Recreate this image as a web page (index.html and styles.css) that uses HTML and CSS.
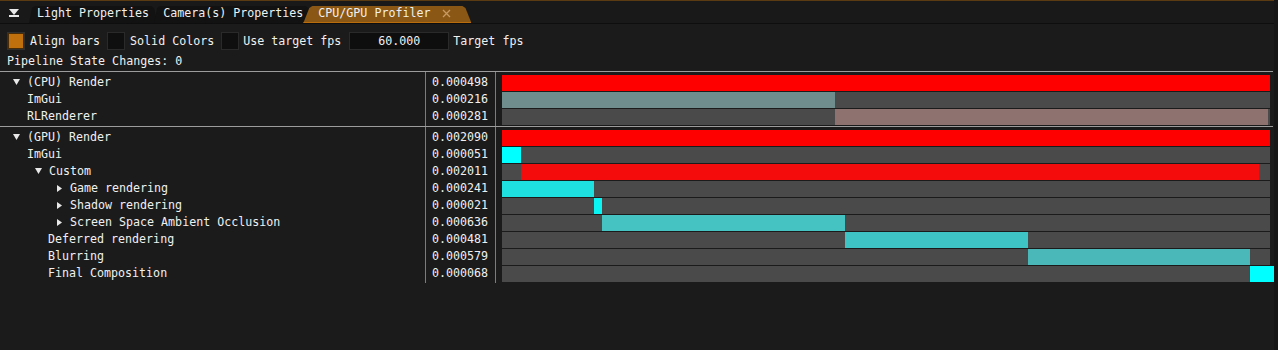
FILE: index.html
```html
<!DOCTYPE html>
<html lang="en">
<head>
  <meta charset="UTF-8">
  <title>CPU/GPU Profiler</title>
  <link rel="stylesheet" href="styles.css">
</head>
<body>
  <div class="window">
    <div class="tabbar">
      <div class="menu-btn">
        <svg width="10" height="8" viewBox="0 0 10 8"><path d="M0 0H10L5 6Z" fill="#e8e8e8"/><rect x="0" y="6" width="10" height="2" fill="#e8e8e8"/></svg>
      </div>
      <div class="tab">Light Properties</div>
      <div class="tab">Camera(s) Properties</div>
      <div class="tab active">CPU/GPU Profiler
        <svg class="close" width="9" height="9" viewBox="0 0 9 9"><path d="M1 1L8 8M8 1L1 8" stroke="#c89a62" stroke-width="1.3"/></svg>
      </div>
    </div>

    <div class="controls">
      <div class="ctl-row">
        <span class="check on"></span><span class="label">Align bars</span>
        <span class="check"></span><span class="label">Solid Colors</span>
        <span class="check"></span><span class="label short">Use target fps</span>
        <span class="input">60.000</span><span class="label short">Target fps</span>
      </div>
      <div class="text-line">Pipeline State Changes: 0</div>
    </div>

    <div class="section">
      <div class="row">
        <div class="name node d1"><svg class="arrow" width="7" height="6" viewBox="0 0 7 6"><path d="M0 0H7L3.5 6Z"/></svg>(CPU) Render</div>
        <div class="num">0.000498</div>
        <div class="bar"><span class="seg red" style="width:768px"></span></div>
      </div>
      <div class="row">
        <div class="name leaf l1">ImGui</div>
        <div class="num">0.000216</div>
        <div class="bar"><span class="seg slate" style="width:333px"></span></div>
      </div>
      <div class="row">
        <div class="name leaf l1">RLRenderer</div>
        <div class="num">0.000281</div>
        <div class="bar"><span class="gap" style="width:333px"></span><span class="seg rose" style="width:433px"></span></div>
      </div>
    </div>

    <div class="section">
      <div class="row">
        <div class="name node d1"><svg class="arrow" width="7" height="6" viewBox="0 0 7 6"><path d="M0 0H7L3.5 6Z"/></svg>(GPU) Render</div>
        <div class="num">0.002090</div>
        <div class="bar"><span class="seg red" style="width:768px"></span></div>
      </div>
      <div class="row">
        <div class="name leaf l1">ImGui</div>
        <div class="num">0.000051</div>
        <div class="bar"><span class="seg cyan" style="width:19px"></span></div>
      </div>
      <div class="row">
        <div class="name node d2"><svg class="arrow" width="7" height="6" viewBox="0 0 7 6"><path d="M0 0H7L3.5 6Z"/></svg>Custom</div>
        <div class="num">0.002011</div>
        <div class="bar"><span class="gap" style="width:19px"></span><span class="seg red2" style="width:738px"></span></div>
      </div>
      <div class="row">
        <div class="name node d3"><svg class="arrow" width="7" height="7" viewBox="0 0 7 7"><path d="M1 0V7L6 3.5Z"/></svg>Game rendering</div>
        <div class="num">0.000241</div>
        <div class="bar"><span class="seg aqua" style="width:92px"></span></div>
      </div>
      <div class="row">
        <div class="name node d3"><svg class="arrow" width="7" height="7" viewBox="0 0 7 7"><path d="M1 0V7L6 3.5Z"/></svg>Shadow rendering</div>
        <div class="num">0.000021</div>
        <div class="bar"><span class="gap" style="width:92px"></span><span class="seg cyan2" style="width:8px"></span></div>
      </div>
      <div class="row">
        <div class="name node d3"><svg class="arrow" width="7" height="7" viewBox="0 0 7 7"><path d="M1 0V7L6 3.5Z"/></svg>Screen Space Ambient Occlusion</div>
        <div class="num">0.000636</div>
        <div class="bar"><span class="gap" style="width:100px"></span><span class="seg teal" style="width:243px"></span></div>
      </div>
      <div class="row">
        <div class="name leaf l2">Deferred rendering</div>
        <div class="num">0.000481</div>
        <div class="bar"><span class="gap" style="width:343px"></span><span class="seg teal2" style="width:183px"></span></div>
      </div>
      <div class="row">
        <div class="name leaf l2">Blurring</div>
        <div class="num">0.000579</div>
        <div class="bar"><span class="gap" style="width:526px"></span><span class="seg teal3" style="width:222px"></span></div>
      </div>
      <div class="row">
        <div class="name leaf l2">Final Composition</div>
        <div class="num">0.000068</div>
        <div class="bar"><span class="gap" style="width:748px"></span><span class="seg cyan" style="width:24px"></span></div>
      </div>
    </div>
  </div>
</body>
</html>
```

FILE: styles.css
```css
body {
  margin: 0;
  background-color: #161616;
  font-family: "DejaVu Sans Mono", "Liberation Mono", monospace;
  font-size: 11.65px;
  color: #f0f0f0;
}
.window {
  width: 1274px;
  height: 349px;
  background-color: #1b1b1b;
  border-top: 1px solid #5b3b12;
  overflow: hidden;
}
.tabbar {
  display: flex;
  align-items: flex-end;
  height: 22px;
  border-bottom: 1px solid #0e0e0e;
  background-color: #191919;
}
.menu-btn {
  width: 29px;
  height: 22px;
  display: flex;
  align-items: center;
  padding-left: 9px;
  box-sizing: border-box;
}
.menu-btn svg {
  margin-top: 1px;
}
.tab {
  position: relative;
  height: 17px;
  line-height: 13px;
  padding: 1px 8px 0 8px;
  box-sizing: border-box;
  background-color: #121212;
  clip-path: polygon(0 100%, 3px 2px, 6px 0, calc(100% - 6px) 0, calc(100% - 3px) 2px, 100% 100%);
  white-space: nowrap;
}
.tab + .tab {
  margin-left: -3px;
  padding-left: 9px;
}
.tab.active {
  margin-left: -8px;
  padding-left: 15px;
  padding-right: 20px;
  background-color: #8a5715;
  border-bottom: 1px solid #b96d0d;
  clip-path: polygon(0 100%, 6px 2px, 9px 0, calc(100% - 9px) 0, calc(100% - 6px) 2px, 100% 100%);
}
.close {
  margin-left: 5px;
  vertical-align: -1px;
}
.controls {
  padding: 8px 7px 4px 7px;
}
.ctl-row {
  display: flex;
  align-items: center;
  height: 18px;
}
.check {
  width: 18px;
  height: 18px;
  box-sizing: border-box;
  border: 1px solid #2a2a2a;
  background-color: #0f0f0f;
}
.check.on {
  border-color: #303030;
  background-color: #c0700c;
  box-shadow: inset 0 0 0 1px #4a2c06;
}
.label {
  margin: 0 7px 0 5px;
  white-space: nowrap;
}
.label.short {
  margin: 0 8px 0 4px;
}
.input {
  width: 100px;
  height: 18px;
  line-height: 16px;
  box-sizing: border-box;
  border: 1px solid #2a2a2a;
  background-color: #0e0e0e;
  text-align: center;
}
.text-line {
  margin-top: 4px;
  height: 13px;
  line-height: 14px;
}
.section {
  width: 1273px;
  border-top: 1px solid #9c9c9c;
  padding-top: 3px;
  background:
    linear-gradient(#7c7c7c, #7c7c7c) 425px 0 / 1px 100% no-repeat,
    linear-gradient(#7c7c7c, #7c7c7c) 495px 0 / 1px 100% no-repeat;
}
.row {
  display: grid;
  grid-template-columns: 425px 77px 768px;
  height: 17px;
  line-height: 15px;
}
.name {
  display: flex;
  align-items: flex-start;
  white-space: nowrap;
}
.name.d1 { padding-left: 13px; }
.name.d2 { padding-left: 35px; }
.name.d3 { padding-left: 56px; }
.name.l1 { padding-left: 27px; }
.name.l2 { padding-left: 48px; }
.arrow {
  fill: #e8e8e8;
  margin: 4px 7px 0 0;
  flex-shrink: 0;
}
.num {
  text-align: right;
  padding-right: 14px;
}
.bar {
  display: flex;
  height: 16px;
  background-color: #4a4a4a;
}
.gap, .seg {
  flex-shrink: 0;
  height: 16px;
}
.red { background-color: #ff0000; }
.red2 { background-color: #f40c0c; }
.slate { background-color: #6f8d8d; }
.rose { background-color: #8e7270; }
.cyan { background-color: #00ffff; }
.cyan2 { background-color: #0af4f4; }
.aqua { background-color: #1fe0e0; }
.teal { background-color: #45c2c2; }
.teal2 { background-color: #3ec4c4; }
.teal3 { background-color: #4ab8b8; }
```
